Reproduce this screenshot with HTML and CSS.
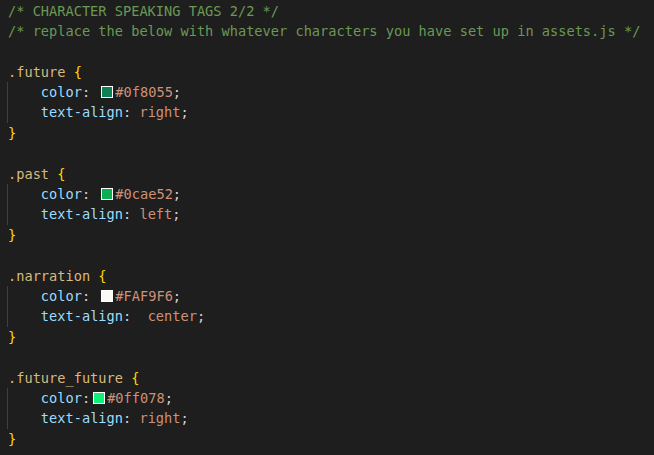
FILE: index.html
```html
<!DOCTYPE html>
<html>
<head>
<meta charset="utf-8">
<link rel="stylesheet" href="styles.css">
</head>
<body>
<div class="editor">
<div class="line"><span class="cm">/* CHARACTER SPEAKING TAGS 2/2 */</span></div>
<div class="line"><span class="cm">/* replace the below with whatever characters you have set up in assets.js */</span></div>
<div class="line"> </div>
<div class="line"><span class="sel">.future</span> <span class="br">{</span></div>
<div class="line ind">    <span class="pr">color</span><span class="pn">:</span> <span class="sw sw1"></span><span class="va">#0f8055</span><span class="pn">;</span></div>
<div class="line ind">    <span class="pr">text-align</span><span class="pn">:</span> <span class="va">right</span><span class="pn">;</span></div>
<div class="line"><span class="br">}</span></div>
<div class="line"> </div>
<div class="line"><span class="sel">.past</span> <span class="br">{</span></div>
<div class="line ind">    <span class="pr">color</span><span class="pn">:</span> <span class="sw sw2"></span><span class="va">#0cae52</span><span class="pn">;</span></div>
<div class="line ind">    <span class="pr">text-align</span><span class="pn">:</span> <span class="va">left</span><span class="pn">;</span></div>
<div class="line"><span class="br">}</span></div>
<div class="line"> </div>
<div class="line"><span class="sel">.narration</span> <span class="br">{</span></div>
<div class="line ind">    <span class="pr">color</span><span class="pn">:</span> <span class="sw sw3"></span><span class="va">#FAF9F6</span><span class="pn">;</span></div>
<div class="line ind">    <span class="pr">text-align</span><span class="pn">:</span>  <span class="va">center</span><span class="pn">;</span></div>
<div class="line"><span class="br">}</span></div>
<div class="line"> </div>
<div class="line"><span class="sel">.future_future</span> <span class="br">{</span></div>
<div class="line ind">    <span class="pr">color</span><span class="pn">:</span><span class="sw sw4"></span><span class="va">#0ff078</span><span class="pn">;</span></div>
<div class="line ind">    <span class="pr">text-align</span><span class="pn">:</span> <span class="va">right</span><span class="pn">;</span></div>
<div class="line"><span class="br">}</span></div>
</div>
</body>
</html>
```
FILE: styles.css
```css
html, body {
  margin: 0;
  padding: 0;
  background: #1e1e1e;
  height: 100%;
}
.editor {
  font-family: "DejaVu Sans Mono", "Liberation Mono", monospace;
  font-size: 13.65px;
  line-height: 20.4px;
  color: #d4d4d4;
  padding-top: 0.5px;
}
.line {
  padding-left: 8px;
  height: 20.4px;
  white-space: pre;
}
.line.ind {
  background: linear-gradient(#404040, #404040) 7px 0 / 1px 100% no-repeat;
}
.cm { color: #6a9955; }
.sel { color: #d7ba7d; }
.br { color: #ffd700; }
.pr { color: #9cdcfe; }
.va { color: #ce9178; }
.pn { color: #d4d4d4; }
.sw {
  display: inline-block;
  width: 10px;
  height: 10px;
  border: 1px solid #ffffff;
  margin: 0 2px 0 3px;
  vertical-align: -1px;
}
.sw1 { background: #0f8055; }
.sw2 { background: #0cae52; }
.sw3 { background: #faf9f6; }
.sw4 { background: #0ff078; }
```
